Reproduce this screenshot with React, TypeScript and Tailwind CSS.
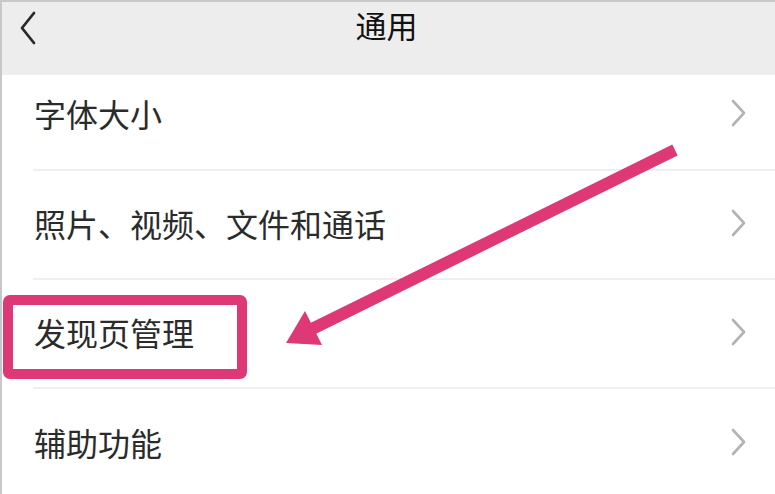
import React from "react";

const Chevron = () => (
  <svg width="16" height="28" viewBox="0 0 16 28" className="shrink-0">
    <path d="M2 2 L13 14 L2 26" fill="none" stroke="#b3b3b3" strokeWidth="2.6" strokeLinecap="round" strokeLinejoin="round" />
  </svg>
);

const rows = [
  { label: "字体大小", h: "h-[96px]", pb: "pb-[18px]" },
  { label: "照片、视频、文件和通话", h: "h-[109px]", pb: "pb-[4px]" },
  { label: "发现页管理", h: "h-[109px]", pb: "pb-[4px]" },
  { label: "辅助功能", h: "h-[109px]", pb: "pb-[4px]" },
];

export default function App() {
  return (
    <div
      className="relative w-[775px] h-[494px] overflow-hidden bg-white border-l-2 border-t-2 border-[#c8c8c8]"
      style={{ fontFamily: '"Noto Sans CJK SC", "Noto Sans", sans-serif' }}
    >
      <div className="relative h-[73px] bg-[#ededed] flex items-start justify-center pt-[7px]">
        <svg width="20" height="36" viewBox="0 0 20 36" className="absolute left-[17px] top-[9px]">
          <path d="M15 2 L3 17 L15 32" fill="none" stroke="#2a2a2a" strokeWidth="2.8" strokeLinecap="round" strokeLinejoin="round" />
        </svg>
        <span className="text-[31px] leading-none text-[#111] -ml-[4px]">通用</span>
      </div>
      <div className="flex flex-col">
        {rows.map((r, i) => (
          <div key={i} className={`${r.h} flex flex-col`}>
            <div className={`flex-1 flex items-center justify-between pl-[32px] pr-[28px] ${r.pb}`}>
              <span className="text-[32px] leading-none text-[#2b2b2b]">{r.label}</span>
              <Chevron />
            </div>
            {i < rows.length - 1 && <div className="ml-[31px] h-[2px] bg-[#efefef]" />}
          </div>
        ))}
      </div>
      <div className="absolute left-[1px] top-[293px] w-[244px] h-[84px] border-[10px] border-[#df3877] rounded-[7px]" />
      <svg className="absolute left-0 top-0" width="775" height="494" viewBox="0 0 775 494">
        <line x1="673" y1="148" x2="310" y2="327" stroke="#df3877" strokeWidth="12" />
        <polygon points="284,341 303,309 320,343" fill="#df3877" />
      </svg>
    </div>
  );
}
